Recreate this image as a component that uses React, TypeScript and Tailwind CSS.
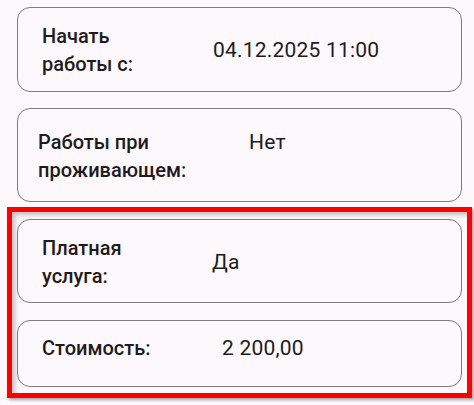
import React from 'react';

interface InfoCardProps {
  lines: string[];
  value: string;
  labelWidth: string;
  padding: string;
  align: 'center' | 'start';
}

function InfoCard({ lines, value, labelWidth, padding, align }: InfoCardProps) {
  return (
    <div
      className={`flex w-[445px] rounded-[13px] border border-[#7e7b80] bg-[#fdf8fc] ${padding} ${
        align === 'center' ? 'items-center' : 'items-start'
      }`}
    >
      <div className={`${labelWidth} shrink-0 text-[20px] font-medium leading-7 text-[#1d1b20]`}>
        {lines.map((line) => (
          <div key={line}>{line}</div>
        ))}
      </div>
      <div className="text-[21px] leading-7 tracking-[0.2px] text-[#1d1b20]">{value}</div>
    </div>
  );
}

export default function App() {
  return (
    <div
      className="w-[474px] h-[405px] bg-[#fdf8fc] pt-[7px] overflow-hidden"
      style={{ fontFamily: 'Roboto, "Noto Sans", sans-serif' }}
    >
      <div className="ml-[17px] flex flex-col gap-[16px]">
        <InfoCard
          lines={['Начать', 'работы с:']}
          value="04.12.2025 11:00"
          labelWidth="w-[171px]"
          padding="pl-[24px] pt-[14px] pb-[13px]"
          align="center"
        />
        <InfoCard
          lines={['Работы при', 'проживающем:']}
          value="Нет"
          labelWidth="w-[211px]"
          padding="pl-[20px] pt-[19px] pb-[17px]"
          align="start"
        />
      </div>

      <div className="ml-[7px] mt-[5px] w-[465px] border-[5px] border-[#ff0000] px-[5px] pt-[7px] pb-[6px] shadow-[2px_2px_3px_rgba(0,0,0,0.35),inset_3px_3px_4px_rgba(0,0,0,0.22)]">
        <div className="flex flex-col gap-[17px]">
          <InfoCard
            lines={['Платная', 'услуга:']}
            value="Да"
            labelWidth="w-[170px]"
            padding="pl-[24px] pt-[14px] pb-[12px]"
            align="center"
          />
          <InfoCard
            lines={['Стоимость:']}
            value="2 200,00"
            labelWidth="w-[180px]"
            padding="pl-[24px] pt-[13px] pb-[24px]"
            align="start"
          />
        </div>
      </div>
    </div>
  );
}
